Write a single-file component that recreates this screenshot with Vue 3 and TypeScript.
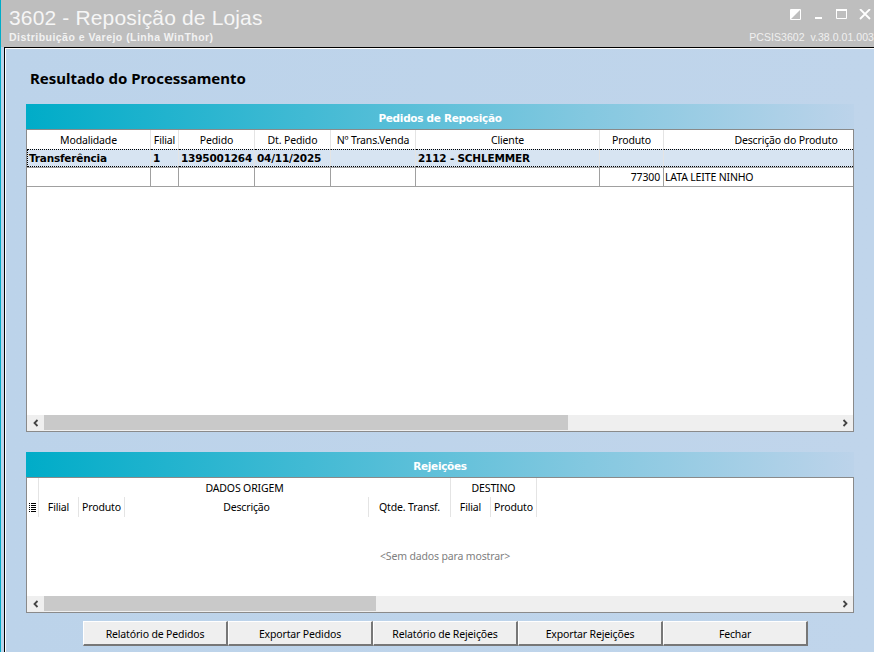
<script setup lang="ts">
interface Col { label: string; w: number }
const cols: Col[] = [
  { label: 'Modalidade', w: 124 },
  { label: 'Filial', w: 28 },
  { label: 'Pedido', w: 76 },
  { label: 'Dt. Pedido', w: 76 },
  { label: 'Nº Trans.Venda', w: 85 },
  { label: 'Cliente', w: 184 },
  { label: 'Produto', w: 64 },
  { label: 'Descrição do Produto', w: 245 },
]
const groupRow = ['Transferência', '1', '1395001264', '04/11/2025', '', '2112 - SCHLEMMER', '', '']
const rejCols: Col[] = [
  { label: 'Filial', w: 40 },
  { label: 'Produto', w: 46 },
  { label: 'Descrição', w: 244 },
  { label: 'Qtde. Transf.', w: 82 },
  { label: 'Filial', w: 40 },
  { label: 'Produto', w: 46 },
]
const buttons = ['Relatório de Pedidos', 'Exportar Pedidos', 'Relatório de Rejeições', 'Exportar Rejeições', 'Fechar']
</script>

<template>
  <div class="window">
    <header class="titlebar">
      <div class="titles">
        <div class="title">3602 - Reposição de Lojas</div>
        <div class="subtitle">Distribuição e Varejo (Linha WinThor)</div>
      </div>
      <div class="meta">
        <div class="controls">
          <svg width="12" height="12" viewBox="0 0 12 12"><path d="M.5.5h10v10H.5z" fill="none" stroke="#fff"/><path d="M1 1h9L1 10z" fill="#fff"/></svg>
          <svg width="12" height="12" viewBox="0 0 12 12"><path d="M2 8h7v2H2z" fill="#fff"/></svg>
          <svg width="12" height="12" viewBox="0 0 12 12"><path d="M.5 1.500h10v8H.5z" fill="none" stroke="#fff"/><path d="M0 0h11v2H0z" fill="#fff"/></svg>
          <svg width="12" height="12" viewBox="0 0 12 12"><path d="M1 0l10 10M11 0L1 10" stroke="#fff" stroke-width="1.800" fill="none"/></svg>
        </div>
        <div class="version">PCSIS3602&nbsp; v.38.0.01.003</div>
      </div>
    </header>

    <div class="frame">
      <main class="content">
        <h1 class="heading">Resultado do Processamento</h1>

        <section class="panel first">
          <div class="panel-title">Pedidos de Reposição</div>
          <div class="grid-box orders">
            <div class="grid-view">
              <table>
                <colgroup><col v-for="c in cols" :key="c.label" :style="{ width: c.w + 'px' }" /></colgroup>
                <thead>
                  <tr><th v-for="c in cols" :key="c.label">{{ c.label }}</th></tr>
                </thead>
                <tbody>
                  <tr class="group">
                    <td v-for="(v, i) in groupRow" :key="i">{{ v }}</td>
                  </tr>
                  <tr class="item">
                    <td></td><td></td><td></td><td></td><td></td><td></td>
                    <td class="num">77300</td>
                    <td class="desc">LATA LEITE NINHO</td>
                  </tr>
                </tbody>
              </table>
            </div>
            <div class="scrollbar">
              <span class="arrow"><svg width="8" height="8" viewBox="0 0 8 8"><path d="M5.500 1L2.500 4l3 3" fill="none" stroke="#444" stroke-width="1.800"/></svg></span>
              <span class="track"><span class="thumb thumb-a"></span></span>
              <span class="arrow"><svg width="8" height="8" viewBox="0 0 8 8"><path d="M2.500 1l3 3-3 3" fill="none" stroke="#444" stroke-width="1.800"/></svg></span>
            </div>
          </div>
        </section>

        <section class="panel second">
          <div class="panel-title">Rejeições</div>
          <div class="grid-box rejects">
            <div class="grid-view">
              <div class="rej-head">
                <div class="indicator">
                  <svg width="7" height="10" viewBox="0 0 7 10"><path d="M0 .5h1M2 .5h5M0 2.500h1M2 2.500h5M0 4.500h1M2 4.500h5M0 6.500h1M2 6.500h5M0 8.500h1M2 8.500h5" stroke="#000" fill="none"/></svg>
                </div>
                <div class="bands">
                  <div class="band-row">
                    <div class="band" style="width: 412px">DADOS ORIGEM</div>
                    <div class="band" style="width: 86px">DESTINO</div>
                  </div>
                  <div class="band-row">
                    <div v-for="(c, i) in rejCols" :key="i" class="band" :style="{ width: c.w + 'px' }">{{ c.label }}</div>
                  </div>
                </div>
              </div>
              <div class="empty">&lt;Sem dados para mostrar&gt;</div>
            </div>
            <div class="scrollbar">
              <span class="arrow"><svg width="8" height="8" viewBox="0 0 8 8"><path d="M5.500 1L2.500 4l3 3" fill="none" stroke="#444" stroke-width="1.800"/></svg></span>
              <span class="track"><span class="thumb thumb-b"></span></span>
              <span class="arrow"><svg width="8" height="8" viewBox="0 0 8 8"><path d="M2.500 1l3 3-3 3" fill="none" stroke="#444" stroke-width="1.800"/></svg></span>
            </div>
          </div>
        </section>

        <div class="actions">
          <button v-for="b in buttons" :key="b" type="button">{{ b }}</button>
        </div>
      </main>
    </div>
  </div>
</template>

<style>
html, body { margin: 0; padding: 0; overflow: hidden; }
</style>

<style scoped>
.window {
  width: 874px;
  height: 652px;
  box-sizing: border-box;
  overflow: hidden;
  display: flex;
  flex-direction: column;
  background: #bcd3ea;
  border-left: 1px solid #00acc8;
  font-family: "Noto Sans", "DejaVu Sans", sans-serif;
  font-size: 10.500px;
  letter-spacing: -0.15px;
  color: #000;
}
.titlebar {
  height: 47px;
  flex: none;
  display: flex;
  justify-content: space-between;
  background: #bebebe;
  color: #fff;
  font-family: "Liberation Sans", Arial, sans-serif;
  letter-spacing: 0;
}
.titles { padding: 6px 0 0 8px; }
.title { font-size: 21px; line-height: 24px; letter-spacing: 0.15px; color: #f6f6f6; }
.subtitle { font-size: 10.500px; line-height: 12px; font-weight: 700; margin-top: 1px; letter-spacing: 0.47px; color: #f2f2f2; }
.meta { display: flex; flex-direction: column; align-items: flex-end; }
.controls { display: flex; gap: 11px; padding: 9px 3px 0 0; height: 12px; }
.version { margin-top: 10px; font-size: 10.500px; line-height: 12px; letter-spacing: 0.05px; color: #f0f0f0; white-space: nowrap; }

.frame {
  flex: 1;
  min-height: 0;
  margin-left: 3px;
  border-left: 1px solid #000;
  border-top: 1px solid #000;
  display: flex;
}
.content {
  flex: 1;
  min-width: 0;
  border-left: 1px solid #fff;
  border-top: 1px solid #fff;
  padding: 0 20px 0 20px;
  background: linear-gradient(90deg, #bcd3ea, #c0d5eb);
}
.heading {
  margin: 0;
  padding: 20px 0 0 4px;
  height: 35px;
  box-sizing: content-box;
  font-family: "Noto Sans", sans-serif;
  font-size: 15px;
  line-height: 18px;
  letter-spacing: -0.03px;
  font-weight: 700;
}
.panel-title {
  height: 25px;
  line-height: 29px;
  text-align: center;
  color: #fff;
  font-family: "DejaVu Sans", sans-serif;
  font-weight: 700;
  font-size: 10.500px;
  letter-spacing: -0.3px;
  background: linear-gradient(90deg, #00acc8 0%, #84c8e0 68%, #bcd3ea 100%);
}
.grid-box {
  border: 1px solid #8a8a8a;
  background: #fff;
  display: flex;
  flex-direction: column;
  box-sizing: border-box;
}
.orders { height: 303px; }
.rejects { height: 136px; }
.second { margin-top: 20px; }
.grid-view { flex: 1; min-height: 0; overflow: hidden; display: flex; flex-direction: column; }

table { border-collapse: separate; border-spacing: 0; table-layout: fixed; width: 882px; }
th {
  height: 19px;
  padding: 0;
  font-weight: 400;
  font-size: 10.500px;
  text-align: center;
  border-right: 1px solid #e4e4e4;
  white-space: nowrap;
  overflow: hidden;
}
td {
  padding: 0 2px;
  box-sizing: border-box;
  border-right: 1px solid #a0a0a0;
  white-space: nowrap;
  overflow: hidden;
}
.group td {
  height: 18px;
  background: #d7e4f2;
  border-top: 1px dotted #000;
  border-bottom: 1px dotted #000;
  border-right-color: #e4e4e4;
  font-family: "DejaVu Sans", sans-serif;
  font-weight: 700;
  font-size: 10.500px;
  letter-spacing: -0.2px;
}
.group td:first-child { border-left: 1px dotted #000; padding-left: 1px; }
.item td {
  height: 20px;
  padding-bottom: 1px;
  border-top: 1px solid #a0a0a0;
  border-bottom: 1px solid #a0a0a0;
}
.item .num { text-align: right; padding-right: 3px; }
.item .desc { padding-left: 1px; }

.scrollbar { height: 16px; flex: none; display: flex; background: #efefef; }
.arrow { width: 17px; flex: none; display: flex; align-items: center; justify-content: center; }
.track { flex: 1; }
.thumb { display: block; height: 15px; background: #c9c9c9; }
.thumb-a { width: 524px; }
.thumb-b { width: 332px; }

.rej-head { display: flex; height: 39px; flex: none; }
.indicator {
  width: 11px;
  flex: none;
  border-right: 1px solid #e4e4e4;
  display: flex;
  align-items: flex-end;
  justify-content: center;
  padding-bottom: 4px;
  box-sizing: content-box;
  height: 35px;
}
.band-row { display: flex; height: 19px; }
.band-row + .band-row { height: 20px; }
.band {
  box-sizing: border-box;
  text-align: center;
  line-height: 21px;
  border-right: 1px solid #e4e4e4;
  white-space: nowrap;
}
.empty {
  flex: 1;
  display: flex;
  align-items: center;
  justify-content: center;
  padding: 0 0 2px 10px;
  color: #808080;
}

.actions { display: flex; padding: 8px 0 0 57px; }
button {
  width: 145px;
  height: 25px;
  box-sizing: border-box;
  padding: 1px 0 0;
  font: inherit;
  letter-spacing: inherit;
  color: #000;
  background: #efefef;
  border-style: solid;
  border-width: 1px 2px 2px 1px;
  border-color: #fff #777 #777 #fff;
  border-radius: 0;
}
</style>
